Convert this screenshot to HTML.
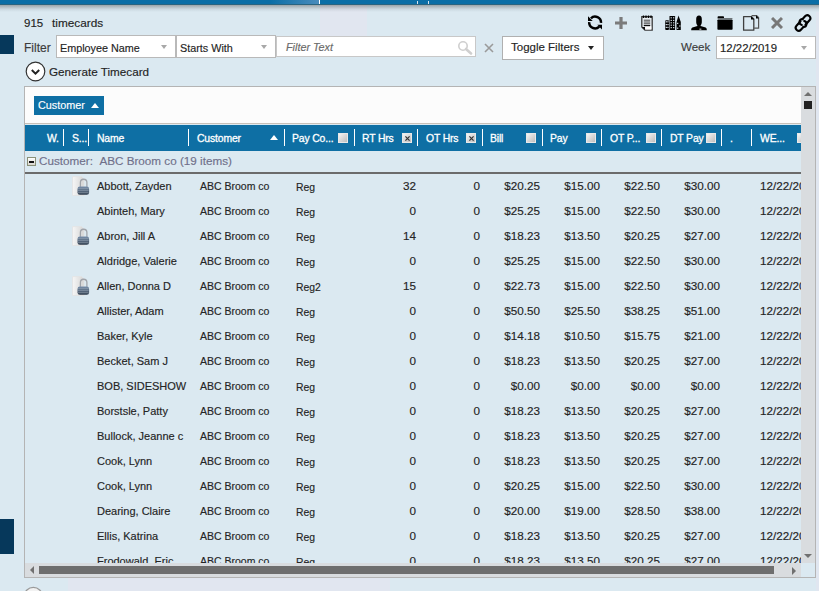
<!DOCTYPE html>
<html><head><meta charset="utf-8">
<style>
*{box-sizing:border-box;margin:0;padding:0}
html,body{width:819px;height:591px;overflow:hidden}
body{position:relative;background:#dbe9f1;font-family:"Liberation Sans",sans-serif;font-size:11px;color:#242424}
.t{-webkit-text-stroke:0.15px currentColor}
.a{position:absolute}
.t{position:absolute;white-space:nowrap;line-height:1}
#topbar{left:0;top:0;width:819px;height:5px;background:linear-gradient(#0b6ea6 0,#0b6ea6 4px,#2a6480 4px,#2a6480 5px)}
#topshadow{left:0;top:5px;width:819px;height:7px;background:linear-gradient(rgba(70,70,70,.42),rgba(90,100,110,.12) 60%,rgba(90,100,110,0))}
.navy{background:#06385b}
.box{background:#fff;border:1px solid #b9b9b9}
.dd{position:absolute;width:0;height:0;border-left:3.5px solid transparent;border-right:3.5px solid transparent;border-top:4px solid #a8a8a8}
/* grid */
#grid{left:24px;top:86px;width:792px;height:492px;border:1px solid #b4b4b4;background:#dbe9f1}
#gtool{left:25px;top:87px;width:776px;height:37px;background:#fcfcfc;border-bottom:1px solid #c8c0b8}
#ghead{left:25px;top:125px;width:776px;height:26px;background:#0e6fa4}
.sep{position:absolute;top:129px;width:1px;height:17px;background:#fff}
.ht{-webkit-text-stroke:0.3px #fff;letter-spacing:-0.15px;position:absolute;top:133.9px;color:#fff;font-size:10.4px;white-space:nowrap;line-height:1}
.cb{position:absolute;top:133px;width:9.5px;height:9.5px;background:linear-gradient(135deg,#f4f4f4,#bdbdbd);border:1px solid #e8e8e8}
#grow{left:25px;top:151px;width:776px;height:21px;background:#dbe9f1}
#gline{left:25px;top:172px;width:776px;height:2px;background:#6b6b6b}
.row{position:absolute;left:25px;width:776px;height:25px}
.c{position:absolute;top:8px;white-space:nowrap;line-height:1;font-size:11px}
.n{font-size:11.7px;text-align:right}
#vscroll{left:801px;top:87px;width:14px;height:476px;background:#d9dcdf}
#hscroll{left:25px;top:563px;width:776px;height:14px;background:#d9dcdf}
#corner{left:801px;top:563px;width:14px;height:14px;background:#dbe9f1}
</style></head><body>
<div class="a" id="topbar"></div>
<div class="a" style="left:270px;top:0;width:49px;height:4px;background:linear-gradient(90deg,#0b6ea6,#4a8cbc)"></div>
<div class="a" style="left:319px;top:0;width:1px;height:4px;background:#fff"></div>
<div class="a" style="left:417px;top:1px;width:1px;height:3px;background:#d8e4ee"></div>
<div class="a" style="left:428px;top:1px;width:1px;height:3px;background:#d8e4ee"></div>
<div class="a" style="left:320px;top:5px;width:47px;height:31px;background:#e1e6f0"></div>
<div class="a" style="left:68px;top:578px;width:322px;height:13px;background:#e1e6f0"></div>
<div class="a" id="topshadow"></div>

<div class="a" style="left:816px;top:12px;width:3px;height:579px;background:#e0e6f0"></div>
<div class="a navy" style="left:0;top:35px;width:14px;height:19px"></div>
<div class="a navy" style="left:0;top:519px;width:14px;height:35px"></div>

<div class="t" style="left:24px;top:18px;font-size:11.5px">915</div><div class="t" style="left:52px;top:18px;font-size:11.8px">timecards</div>

<!-- toolbar icons -->
<div id="icons"><svg class="a" style="left:585px;top:13px" width="20" height="20" viewBox="0 0 20 20"><g fill="none" stroke="#000" stroke-width="2.5"><path d="M5.93 5.38A5.9 5.9 0 0 1 16.0 9.9"/><path d="M4.2 9.2A5.9 5.9 0 0 0 14.27 13.72"/></g><path d="M3 3.2V7.9H7.7Z" fill="#000"/><path d="M17 11.7V16.4L12.3 11.7Z" fill="#000"/></svg>
<svg class="a" style="left:615px;top:17px" width="12" height="12" viewBox="0 0 12 12"><path d="M6 0V12M0 6H12" stroke="#7b7b7b" stroke-width="3.2"/></svg>
<svg class="a" style="left:641px;top:15px" width="12" height="16" viewBox="0 0 12 16"><path d="M0.8 1.6H11.2V15.2H4L0.8 12Z" fill="#e9eff3" stroke="#3a3a3a" stroke-width="1.3"/><path d="M0.8 12H4V15.2Z" fill="#111"/><rect x="4.3" y="11.3" width="6" height="3.2" fill="#fff"/><path d="M2.5 0.4V3M5 0.4V3M7.5 0.4V3M10 0.4V3" stroke="#000" stroke-width="1.4"/><path d="M2.8 5.2H9.2M2.8 7H9.2M2.8 8.8H9.2" stroke="#333" stroke-width="0.9"/><path d="M2.8 10.6H9.2" stroke="#000" stroke-width="1.1"/></svg>
<svg class="a" style="left:663px;top:13px" width="20" height="20" viewBox="0 0 20 20"><rect x="2.2" y="7.2" width="3.8" height="9.8" rx="0.9" fill="#000"/><rect x="6.5" y="3" width="5.6" height="14" rx="0.6" fill="#000"/><path d="M13.5 17V9L15.5 2.6L17.8 9V17Z" fill="#000"/><rect x="2.70" y="8.20" width="1.3" height="1.2" fill="#c8d0d8"/><rect x="4.30" y="8.20" width="1.3" height="1.2" fill="#c8d0d8"/><rect x="2.70" y="11.00" width="1.3" height="1.2" fill="#c8d0d8"/><rect x="4.30" y="11.00" width="1.3" height="1.2" fill="#c8d0d8"/><rect x="2.70" y="13.80" width="1.3" height="1.2" fill="#c8d0d8"/><rect x="4.30" y="13.80" width="1.3" height="1.2" fill="#c8d0d8"/><rect x="7.60" y="4.20" width="1.3" height="1.2" fill="#c8d0d8"/><rect x="10.00" y="4.20" width="1.3" height="1.2" fill="#c8d0d8"/><rect x="7.60" y="6.80" width="1.3" height="1.2" fill="#c8d0d8"/><rect x="10.00" y="6.80" width="1.3" height="1.2" fill="#c8d0d8"/><rect x="7.60" y="9.20" width="1.3" height="1.2" fill="#c8d0d8"/><rect x="10.00" y="9.20" width="1.3" height="1.2" fill="#c8d0d8"/><rect x="7.60" y="11.60" width="1.3" height="1.2" fill="#c8d0d8"/><rect x="10.00" y="11.60" width="1.3" height="1.2" fill="#c8d0d8"/><rect x="7.60" y="14.00" width="1.3" height="1.2" fill="#c8d0d8"/><rect x="10.00" y="14.00" width="1.3" height="1.2" fill="#c8d0d8"/><rect x="14.00" y="9.80" width="1.3" height="1.2" fill="#c8d0d8"/><rect x="16.20" y="12.40" width="1.3" height="1.2" fill="#c8d0d8"/><rect x="14.00" y="14.60" width="1.3" height="1.2" fill="#c8d0d8"/></svg>
<svg class="a" style="left:691px;top:15px" width="16" height="16" viewBox="0 0 16 16"><path d="M5.2 4A2.8 3.6 0 0 1 10.8 4V7.2C10.8 8.8 10 9.8 9.6 10.4V11L14.6 12.6C15.6 13 15.8 14.2 15.8 15.2H0.2C0.2 14.2 0.4 13 1.4 12.6L6.4 11V10.4C6 9.8 5.2 8.8 5.2 7.2Z" fill="#000"/><rect x="8.4" y="13.6" width="2" height="1.2" fill="#bbb"/></svg>
<svg class="a" style="left:717px;top:16px" width="16" height="14" viewBox="0 0 16 14"><path d="M0.6 1.2C0.6 0.6 1 0.2 1.6 0.2H6C6.6 0.2 7 0.6 7 1.2V2H15.4V2.6H0.6Z" fill="#000"/><rect x="0.4" y="3.4" width="15.2" height="10.4" rx="0.8" fill="#000"/></svg>
<svg class="a" style="left:742px;top:14px" width="18" height="17" viewBox="0 0 18 17"><path d="M9.6 1.6H14.6L16.6 3.6V14.2H12.2" fill="none" stroke="#555" stroke-width="1.2"/><path d="M14 1.3L17 4.4H14Z" fill="#000"/><path d="M1.6 2.6H9.4L11.8 5V16.2H1.6Z" fill="#fff" fill-opacity="0" stroke="#3f3f3f" stroke-width="1.3" stroke-linejoin="round"/><path d="M9 2.2L12.3 5.6H9Z" fill="#000"/></svg>
<svg class="a" style="left:771px;top:17px" width="12" height="12" viewBox="0 0 12 12"><path d="M1 1L11 11M11 1L1 11" stroke="#787878" stroke-width="3"/></svg>
<svg class="a" style="left:793px;top:13px" width="20" height="20" viewBox="0 0 20 20"><g transform="rotate(-48 10 10)" fill="none" stroke="#000" stroke-width="2.1" stroke-linecap="round"><path d="M9.6 7H3.6A3 3 0 0 0 3.6 13H7.6"/><path d="M10.4 13H16.4A3 3 0 0 0 16.4 7H12.4"/><path d="M7.3 13A3 3 0 0 0 12.2 9.6"/><path d="M12.7 7A3 3 0 0 0 7.8 10.4"/></g></svg>
</div><!--endicons-->

<div class="t" style="left:24px;top:41.8px;font-size:12px;color:#3c3c3c">Filter</div>
<div class="a box" style="left:56px;top:35px;width:120px;height:23px"></div>
<div class="t" style="left:60px;top:43px;font-size:10.8px">Employee Name</div>
<div class="dd" style="left:161px;top:45px"></div>
<div class="a box" style="left:176px;top:35px;width:100px;height:23px"></div>
<div class="t" style="left:180px;top:43px;font-size:10.8px">Starts With</div>
<div class="dd" style="left:261px;top:45px"></div>
<div class="a box" style="left:276px;top:36px;width:200px;height:21px;border-color:#c8c8c8"></div>
<div class="t" style="left:286px;top:42px;font-size:10.8px;font-style:italic;color:#6a6a6a">Filter Text</div>
<svg class="a" style="left:457px;top:40px" width="16" height="15" viewBox="0 0 16 15"><circle cx="6" cy="6" r="4.2" fill="none" stroke="#cfcfcf" stroke-width="1.6"/><line x1="9" y1="9" x2="14" y2="13.5" stroke="#cfcfcf" stroke-width="2.6" stroke-linecap="round"/></svg>
<svg class="a" style="left:484px;top:43px" width="10" height="10" viewBox="0 0 10 10"><path d="M1 1L9 9M9 1L1 9" stroke="#9a9a9a" stroke-width="1.6"/></svg>
<div class="a box" style="left:502px;top:36px;width:102px;height:24px;border-color:#b0b0b0"></div>
<div class="t" style="left:511px;top:42px;font-size:11.5px">Toggle Filters</div>
<div class="a" style="left:588px;top:46px;width:0;height:0;border-left:3.5px solid transparent;border-right:3.5px solid transparent;border-top:4px solid #222"></div>

<div class="t" style="left:681px;top:42px;font-size:11.5px;color:#3c3c3c">Week</div>
<div class="a box" style="left:716px;top:36px;width:100px;height:23px"></div>
<div class="t" style="left:720px;top:43px;font-size:11.4px">12/22/2019</div>
<div class="dd" style="left:801px;top:46px"></div>

<svg class="a" style="left:25px;top:61px" width="21" height="21" viewBox="0 0 21 21"><circle cx="10.5" cy="10.5" r="9.3" fill="#fff" stroke="#333" stroke-width="1.2"/><path d="M6.8 9L10.5 12.6L14.2 9" fill="none" stroke="#222" stroke-width="2"/></svg>
<div class="t" style="left:49px;top:65.5px;font-size:11.7px">Generate Timecard</div>

<!-- grid -->
<div class="a" id="grid"></div>
<div class="a" id="gtool"></div>
<div class="a" style="left:34px;top:96px;width:70px;height:19px;background:#0e6fa4"></div>
<div class="t" style="left:38px;top:100px;color:#fff;font-size:10.8px">Customer</div>
<div class="a" style="left:91px;top:103px;width:0;height:0;border-left:4.5px solid transparent;border-right:4.5px solid transparent;border-bottom:5px solid #fff"></div>

<div class="a" id="ghead"></div>
<div id="hdr"><div class="sep" style="left:63px"></div>
<div class="sep" style="left:88px"></div>
<div class="sep" style="left:188px"></div>
<div class="sep" style="left:284px"></div>
<div class="sep" style="left:354px"></div>
<div class="sep" style="left:417px"></div>
<div class="sep" style="left:482px"></div>
<div class="sep" style="left:542px"></div>
<div class="sep" style="left:601px"></div>
<div class="sep" style="left:661px"></div>
<div class="sep" style="left:721px"></div>
<div class="sep" style="left:751px"></div>
<div class="ht" style="left:47px">W.</div>
<div class="ht" style="left:72px">S...</div>
<div class="ht" style="left:97px">Name</div>
<div class="ht" style="left:197px">Customer</div>
<div class="ht" style="left:292px">Pay Co...</div>
<div class="ht" style="left:362px">RT Hrs</div>
<div class="ht" style="left:426px">OT Hrs</div>
<div class="ht" style="left:490px">Bill</div>
<div class="ht" style="left:550px">Pay</div>
<div class="ht" style="left:610px">OT P...</div>
<div class="ht" style="left:670px">DT Pay</div>
<div class="ht" style="left:730px">.</div>
<div class="ht" style="left:760px">WE...</div>
<div class="cb" style="left:338px"></div>
<div class="cb" style="left:402px"></div>
<svg class="a" style="left:404.5px;top:135.5px" width="5" height="5" viewBox="0 0 5 5"><path d="M0.4 0.4L4.6 4.6M4.6 0.4L0.4 4.6" stroke="#333" stroke-width="1.2"/></svg>
<div class="cb" style="left:466px"></div>
<svg class="a" style="left:468.5px;top:135.5px" width="5" height="5" viewBox="0 0 5 5"><path d="M0.4 0.4L4.6 4.6M4.6 0.4L0.4 4.6" stroke="#333" stroke-width="1.2"/></svg>
<div class="cb" style="left:526px"></div>
<div class="cb" style="left:586px"></div>
<div class="cb" style="left:646px"></div>
<div class="cb" style="left:706px"></div>
<div class="cb" style="left:797px"></div>
<div class="a" style="left:270px;top:135px;width:0;height:0;border-left:4.5px solid transparent;border-right:4.5px solid transparent;border-bottom:5px solid #fff"></div>
<div class="a" style="left:801px;top:125px;width:14px;height:26px;background:#dcdcdc"></div></div><!--endhdr-->

<div class="a" id="grow"></div>
<div class="a" style="left:27px;top:157px;width:9px;height:9px;border:1px solid #8a9078;background:linear-gradient(#fff,#d8d4cc)"></div>
<div class="a" style="left:29px;top:161px;width:5px;height:1.5px;background:#111"></div>
<div class="t" style="left:39px;top:155px;color:#70708a;font-size:11.7px">Customer:&nbsp;&nbsp;ABC Broom co (19 items)</div>
<div class="a" id="gline"></div>

<div class="a" style="left:25px;top:174px;width:776px;height:389px;overflow:hidden" id="rows"><svg class="a" style="left:47px;top:2px" width="18" height="20" viewBox="0 0 18 20"><defs><linearGradient id="pg0" x1="0" y1="0" x2="1" y2="0"><stop offset="0" stop-color="#f6f6f6"/><stop offset="0.5" stop-color="#e6e6e6"/><stop offset="1" stop-color="#d4d4d4"/></linearGradient><linearGradient id="lg0" x1="0" y1="0" x2="0" y2="1"><stop offset="0" stop-color="#7890ac"/><stop offset="1" stop-color="#2c3848"/></linearGradient></defs><path d="M0.5 0.6H9.5L12 3V19.5H0.5Z" fill="url(#pg0)" stroke="#e2e2e2" stroke-width="0.8"/><path d="M8.4 11V6.5A3.25 3.25 0 0 1 14.9 6.5V11" fill="none" stroke="#a0a4aa" stroke-width="1.3"/><rect x="5.5" y="10.6" width="11.6" height="8.2" rx="2.4" fill="url(#lg0)"/><path d="M6 12.7H16.6M6 14.7H16.6M6 16.7H16.6" stroke="#9eabb8" stroke-width="0.6"/></svg>
<div class="t c" style="left:72px;top:7px">Abbott, Zayden</div>
<div class="t c" style="left:175px;top:7px;font-size:10.5px">ABC Broom co</div>
<div class="t c" style="left:271px;top:9px;font-size:10.4px">Reg</div>
<div class="t c n" style="left:331px;width:60px;top:6.4px">32</div>
<div class="t c n" style="left:395px;width:60px;top:6.4px">0</div>
<div class="t c n" style="left:455px;width:60px;top:6.4px">$20.25</div>
<div class="t c n" style="left:515px;width:60px;top:6.4px">$15.00</div>
<div class="t c n" style="left:575px;width:60px;top:6.4px">$22.50</div>
<div class="t c n" style="left:635px;width:60px;top:6.4px">$30.00</div>
<div class="t c n" style="left:735px;top:6.4px;text-align:left">12/22/2019</div>
<div class="t c" style="left:72px;top:32px">Abinteh, Mary</div>
<div class="t c" style="left:175px;top:32px;font-size:10.5px">ABC Broom co</div>
<div class="t c" style="left:271px;top:34px;font-size:10.4px">Reg</div>
<div class="t c n" style="left:331px;width:60px;top:31.4px">0</div>
<div class="t c n" style="left:395px;width:60px;top:31.4px">0</div>
<div class="t c n" style="left:455px;width:60px;top:31.4px">$25.25</div>
<div class="t c n" style="left:515px;width:60px;top:31.4px">$15.00</div>
<div class="t c n" style="left:575px;width:60px;top:31.4px">$22.50</div>
<div class="t c n" style="left:635px;width:60px;top:31.4px">$30.00</div>
<div class="t c n" style="left:735px;top:31.4px;text-align:left">12/22/2019</div>
<svg class="a" style="left:47px;top:52px" width="18" height="20" viewBox="0 0 18 20"><defs><linearGradient id="pg2" x1="0" y1="0" x2="1" y2="0"><stop offset="0" stop-color="#f6f6f6"/><stop offset="0.5" stop-color="#e6e6e6"/><stop offset="1" stop-color="#d4d4d4"/></linearGradient><linearGradient id="lg2" x1="0" y1="0" x2="0" y2="1"><stop offset="0" stop-color="#7890ac"/><stop offset="1" stop-color="#2c3848"/></linearGradient></defs><path d="M0.5 0.6H9.5L12 3V19.5H0.5Z" fill="url(#pg2)" stroke="#e2e2e2" stroke-width="0.8"/><path d="M8.4 11V6.5A3.25 3.25 0 0 1 14.9 6.5V11" fill="none" stroke="#a0a4aa" stroke-width="1.3"/><rect x="5.5" y="10.6" width="11.6" height="8.2" rx="2.4" fill="url(#lg2)"/><path d="M6 12.7H16.6M6 14.7H16.6M6 16.7H16.6" stroke="#9eabb8" stroke-width="0.6"/></svg>
<div class="t c" style="left:72px;top:57px">Abron, Jill A</div>
<div class="t c" style="left:175px;top:57px;font-size:10.5px">ABC Broom co</div>
<div class="t c" style="left:271px;top:59px;font-size:10.4px">Reg</div>
<div class="t c n" style="left:331px;width:60px;top:56.4px">14</div>
<div class="t c n" style="left:395px;width:60px;top:56.4px">0</div>
<div class="t c n" style="left:455px;width:60px;top:56.4px">$18.23</div>
<div class="t c n" style="left:515px;width:60px;top:56.4px">$13.50</div>
<div class="t c n" style="left:575px;width:60px;top:56.4px">$20.25</div>
<div class="t c n" style="left:635px;width:60px;top:56.4px">$27.00</div>
<div class="t c n" style="left:735px;top:56.4px;text-align:left">12/22/2019</div>
<div class="t c" style="left:72px;top:82px">Aldridge, Valerie</div>
<div class="t c" style="left:175px;top:82px;font-size:10.5px">ABC Broom co</div>
<div class="t c" style="left:271px;top:84px;font-size:10.4px">Reg</div>
<div class="t c n" style="left:331px;width:60px;top:81.4px">0</div>
<div class="t c n" style="left:395px;width:60px;top:81.4px">0</div>
<div class="t c n" style="left:455px;width:60px;top:81.4px">$25.25</div>
<div class="t c n" style="left:515px;width:60px;top:81.4px">$15.00</div>
<div class="t c n" style="left:575px;width:60px;top:81.4px">$22.50</div>
<div class="t c n" style="left:635px;width:60px;top:81.4px">$30.00</div>
<div class="t c n" style="left:735px;top:81.4px;text-align:left">12/22/2019</div>
<svg class="a" style="left:47px;top:102px" width="18" height="20" viewBox="0 0 18 20"><defs><linearGradient id="pg4" x1="0" y1="0" x2="1" y2="0"><stop offset="0" stop-color="#f6f6f6"/><stop offset="0.5" stop-color="#e6e6e6"/><stop offset="1" stop-color="#d4d4d4"/></linearGradient><linearGradient id="lg4" x1="0" y1="0" x2="0" y2="1"><stop offset="0" stop-color="#7890ac"/><stop offset="1" stop-color="#2c3848"/></linearGradient></defs><path d="M0.5 0.6H9.5L12 3V19.5H0.5Z" fill="url(#pg4)" stroke="#e2e2e2" stroke-width="0.8"/><path d="M8.4 11V6.5A3.25 3.25 0 0 1 14.9 6.5V11" fill="none" stroke="#a0a4aa" stroke-width="1.3"/><rect x="5.5" y="10.6" width="11.6" height="8.2" rx="2.4" fill="url(#lg4)"/><path d="M6 12.7H16.6M6 14.7H16.6M6 16.7H16.6" stroke="#9eabb8" stroke-width="0.6"/></svg>
<div class="t c" style="left:72px;top:107px">Allen, Donna D</div>
<div class="t c" style="left:175px;top:107px;font-size:10.5px">ABC Broom co</div>
<div class="t c" style="left:271px;top:109px;font-size:10.4px">Reg2</div>
<div class="t c n" style="left:331px;width:60px;top:106.4px">15</div>
<div class="t c n" style="left:395px;width:60px;top:106.4px">0</div>
<div class="t c n" style="left:455px;width:60px;top:106.4px">$22.73</div>
<div class="t c n" style="left:515px;width:60px;top:106.4px">$15.00</div>
<div class="t c n" style="left:575px;width:60px;top:106.4px">$22.50</div>
<div class="t c n" style="left:635px;width:60px;top:106.4px">$30.00</div>
<div class="t c n" style="left:735px;top:106.4px;text-align:left">12/22/2019</div>
<div class="t c" style="left:72px;top:132px">Allister, Adam</div>
<div class="t c" style="left:175px;top:132px;font-size:10.5px">ABC Broom co</div>
<div class="t c" style="left:271px;top:134px;font-size:10.4px">Reg</div>
<div class="t c n" style="left:331px;width:60px;top:131.4px">0</div>
<div class="t c n" style="left:395px;width:60px;top:131.4px">0</div>
<div class="t c n" style="left:455px;width:60px;top:131.4px">$50.50</div>
<div class="t c n" style="left:515px;width:60px;top:131.4px">$25.50</div>
<div class="t c n" style="left:575px;width:60px;top:131.4px">$38.25</div>
<div class="t c n" style="left:635px;width:60px;top:131.4px">$51.00</div>
<div class="t c n" style="left:735px;top:131.4px;text-align:left">12/22/2019</div>
<div class="t c" style="left:72px;top:157px">Baker, Kyle</div>
<div class="t c" style="left:175px;top:157px;font-size:10.5px">ABC Broom co</div>
<div class="t c" style="left:271px;top:159px;font-size:10.4px">Reg</div>
<div class="t c n" style="left:331px;width:60px;top:156.4px">0</div>
<div class="t c n" style="left:395px;width:60px;top:156.4px">0</div>
<div class="t c n" style="left:455px;width:60px;top:156.4px">$14.18</div>
<div class="t c n" style="left:515px;width:60px;top:156.4px">$10.50</div>
<div class="t c n" style="left:575px;width:60px;top:156.4px">$15.75</div>
<div class="t c n" style="left:635px;width:60px;top:156.4px">$21.00</div>
<div class="t c n" style="left:735px;top:156.4px;text-align:left">12/22/2019</div>
<div class="t c" style="left:72px;top:182px">Becket, Sam J</div>
<div class="t c" style="left:175px;top:182px;font-size:10.5px">ABC Broom co</div>
<div class="t c" style="left:271px;top:184px;font-size:10.4px">Reg</div>
<div class="t c n" style="left:331px;width:60px;top:181.4px">0</div>
<div class="t c n" style="left:395px;width:60px;top:181.4px">0</div>
<div class="t c n" style="left:455px;width:60px;top:181.4px">$18.23</div>
<div class="t c n" style="left:515px;width:60px;top:181.4px">$13.50</div>
<div class="t c n" style="left:575px;width:60px;top:181.4px">$20.25</div>
<div class="t c n" style="left:635px;width:60px;top:181.4px">$27.00</div>
<div class="t c n" style="left:735px;top:181.4px;text-align:left">12/22/2019</div>
<div class="t c" style="left:72px;top:207px">BOB, SIDESHOW</div>
<div class="t c" style="left:175px;top:207px;font-size:10.5px">ABC Broom co</div>
<div class="t c" style="left:271px;top:209px;font-size:10.4px">Reg</div>
<div class="t c n" style="left:331px;width:60px;top:206.4px">0</div>
<div class="t c n" style="left:395px;width:60px;top:206.4px">0</div>
<div class="t c n" style="left:455px;width:60px;top:206.4px">$0.00</div>
<div class="t c n" style="left:515px;width:60px;top:206.4px">$0.00</div>
<div class="t c n" style="left:575px;width:60px;top:206.4px">$0.00</div>
<div class="t c n" style="left:635px;width:60px;top:206.4px">$0.00</div>
<div class="t c n" style="left:735px;top:206.4px;text-align:left">12/22/2019</div>
<div class="t c" style="left:72px;top:232px">Borstsle, Patty</div>
<div class="t c" style="left:175px;top:232px;font-size:10.5px">ABC Broom co</div>
<div class="t c" style="left:271px;top:234px;font-size:10.4px">Reg</div>
<div class="t c n" style="left:331px;width:60px;top:231.4px">0</div>
<div class="t c n" style="left:395px;width:60px;top:231.4px">0</div>
<div class="t c n" style="left:455px;width:60px;top:231.4px">$18.23</div>
<div class="t c n" style="left:515px;width:60px;top:231.4px">$13.50</div>
<div class="t c n" style="left:575px;width:60px;top:231.4px">$20.25</div>
<div class="t c n" style="left:635px;width:60px;top:231.4px">$27.00</div>
<div class="t c n" style="left:735px;top:231.4px;text-align:left">12/22/2019</div>
<div class="t c" style="left:72px;top:257px">Bullock, Jeanne c</div>
<div class="t c" style="left:175px;top:257px;font-size:10.5px">ABC Broom co</div>
<div class="t c" style="left:271px;top:259px;font-size:10.4px">Reg</div>
<div class="t c n" style="left:331px;width:60px;top:256.4px">0</div>
<div class="t c n" style="left:395px;width:60px;top:256.4px">0</div>
<div class="t c n" style="left:455px;width:60px;top:256.4px">$18.23</div>
<div class="t c n" style="left:515px;width:60px;top:256.4px">$13.50</div>
<div class="t c n" style="left:575px;width:60px;top:256.4px">$20.25</div>
<div class="t c n" style="left:635px;width:60px;top:256.4px">$27.00</div>
<div class="t c n" style="left:735px;top:256.4px;text-align:left">12/22/2019</div>
<div class="t c" style="left:72px;top:282px">Cook, Lynn</div>
<div class="t c" style="left:175px;top:282px;font-size:10.5px">ABC Broom co</div>
<div class="t c" style="left:271px;top:284px;font-size:10.4px">Reg</div>
<div class="t c n" style="left:331px;width:60px;top:281.4px">0</div>
<div class="t c n" style="left:395px;width:60px;top:281.4px">0</div>
<div class="t c n" style="left:455px;width:60px;top:281.4px">$18.23</div>
<div class="t c n" style="left:515px;width:60px;top:281.4px">$13.50</div>
<div class="t c n" style="left:575px;width:60px;top:281.4px">$20.25</div>
<div class="t c n" style="left:635px;width:60px;top:281.4px">$27.00</div>
<div class="t c n" style="left:735px;top:281.4px;text-align:left">12/22/2019</div>
<div class="t c" style="left:72px;top:307px">Cook, Lynn</div>
<div class="t c" style="left:175px;top:307px;font-size:10.5px">ABC Broom co</div>
<div class="t c" style="left:271px;top:309px;font-size:10.4px">Reg</div>
<div class="t c n" style="left:331px;width:60px;top:306.4px">0</div>
<div class="t c n" style="left:395px;width:60px;top:306.4px">0</div>
<div class="t c n" style="left:455px;width:60px;top:306.4px">$20.25</div>
<div class="t c n" style="left:515px;width:60px;top:306.4px">$15.00</div>
<div class="t c n" style="left:575px;width:60px;top:306.4px">$22.50</div>
<div class="t c n" style="left:635px;width:60px;top:306.4px">$30.00</div>
<div class="t c n" style="left:735px;top:306.4px;text-align:left">12/22/2019</div>
<div class="t c" style="left:72px;top:332px">Dearing, Claire</div>
<div class="t c" style="left:175px;top:332px;font-size:10.5px">ABC Broom co</div>
<div class="t c" style="left:271px;top:334px;font-size:10.4px">Reg</div>
<div class="t c n" style="left:331px;width:60px;top:331.4px">0</div>
<div class="t c n" style="left:395px;width:60px;top:331.4px">0</div>
<div class="t c n" style="left:455px;width:60px;top:331.4px">$20.00</div>
<div class="t c n" style="left:515px;width:60px;top:331.4px">$19.00</div>
<div class="t c n" style="left:575px;width:60px;top:331.4px">$28.50</div>
<div class="t c n" style="left:635px;width:60px;top:331.4px">$38.00</div>
<div class="t c n" style="left:735px;top:331.4px;text-align:left">12/22/2019</div>
<div class="t c" style="left:72px;top:357px">Ellis, Katrina</div>
<div class="t c" style="left:175px;top:357px;font-size:10.5px">ABC Broom co</div>
<div class="t c" style="left:271px;top:359px;font-size:10.4px">Reg</div>
<div class="t c n" style="left:331px;width:60px;top:356.4px">0</div>
<div class="t c n" style="left:395px;width:60px;top:356.4px">0</div>
<div class="t c n" style="left:455px;width:60px;top:356.4px">$18.23</div>
<div class="t c n" style="left:515px;width:60px;top:356.4px">$13.50</div>
<div class="t c n" style="left:575px;width:60px;top:356.4px">$20.25</div>
<div class="t c n" style="left:635px;width:60px;top:356.4px">$27.00</div>
<div class="t c n" style="left:735px;top:356.4px;text-align:left">12/22/2019</div>
<div class="t c" style="left:72px;top:382px">Frodowald, Eric</div>
<div class="t c" style="left:175px;top:382px;font-size:10.5px">ABC Broom co</div>
<div class="t c" style="left:271px;top:384px;font-size:10.4px">Reg</div>
<div class="t c n" style="left:331px;width:60px;top:381.4px">0</div>
<div class="t c n" style="left:395px;width:60px;top:381.4px">0</div>
<div class="t c n" style="left:455px;width:60px;top:381.4px">$18.23</div>
<div class="t c n" style="left:515px;width:60px;top:381.4px">$13.50</div>
<div class="t c n" style="left:575px;width:60px;top:381.4px">$20.25</div>
<div class="t c n" style="left:635px;width:60px;top:381.4px">$27.00</div>
<div class="t c n" style="left:735px;top:381.4px;text-align:left">12/22/2019</div></div><!--endrows-->

<div class="a" id="vscroll"></div>
<div class="a" style="left:804px;top:92px;width:0;height:0;border-left:4px solid transparent;border-right:4px solid transparent;border-bottom:4px solid #707070"></div>
<div class="a" style="left:804px;top:101px;width:8px;height:8px;background:#222"></div>
<div class="a" style="left:804px;top:554px;width:0;height:0;border-left:4px solid transparent;border-right:4px solid transparent;border-top:4px solid #707070"></div>
<div class="a" id="hscroll"></div>
<div class="a" style="left:30px;top:566px;width:0;height:0;border-top:4px solid transparent;border-bottom:4px solid transparent;border-right:4px solid #707070"></div>
<div class="a" style="left:39px;top:566px;width:735px;height:8px;background:#6e6e6e"></div>
<div class="a" style="left:792px;top:567px;width:0;height:0;border-top:4px solid transparent;border-bottom:4px solid transparent;border-left:4px solid #707070"></div>
<div class="a" id="corner"></div>

<svg class="a" style="left:20px;top:584px" width="28" height="7" viewBox="0 0 28 7"><circle cx="13.3" cy="12.3" r="9" fill="#f2f2f2" stroke="#9a9a9a" stroke-width="1.3"/></svg>
</body></html>
